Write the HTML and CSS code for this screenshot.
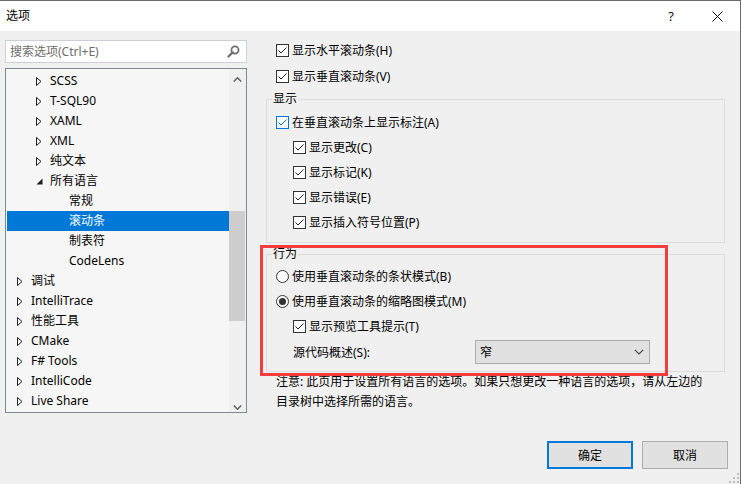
FILE: index.html
```html
<!DOCTYPE html>
<html lang="zh-CN">
<head>
<meta charset="utf-8">
<title>选项</title>
<link rel="stylesheet" href="styles.css">
</head>
<body>
<div class="window">
  <div class="titlebar">
    <span class="title">选项</span>
    <span class="cap-btn help">?</span>
    <span class="cap-btn close"><svg width="11" height="11" viewBox="0 0 11 11"><path d="M0.5 0.5 L10.5 10.5 M10.5 0.5 L0.5 10.5" stroke="#111" stroke-width="1" fill="none"/></svg></span>
  </div>
  <div class="content">
    <div class="main">
      <div class="left">
        <div class="search">
          <span class="placeholder">搜索选项(Ctrl+E)</span>
          <svg class="search-icon" width="13" height="13" viewBox="0 0 13 13"><circle cx="8" cy="5" r="3.6" fill="none" stroke="#6f6f6f" stroke-width="1.7"/><path d="M5.6 7.4 L1.5 11.5" stroke="#6f6f6f" stroke-width="2.2" stroke-linecap="round"/></svg>
        </div>
        <div class="tree">
          <ul class="tree-list">
            <li class="node l2"><span class="tw"><svg width="6" height="9" viewBox="0 0 6 9"><path d="M0.5 0.5 L5 4.5 L0.5 8.5 Z" fill="none" stroke="#1e1e1e"/></svg></span>SCSS</li>
            <li class="node l2"><span class="tw"><svg width="6" height="9" viewBox="0 0 6 9"><path d="M0.5 0.5 L5 4.5 L0.5 8.5 Z" fill="none" stroke="#1e1e1e"/></svg></span>T-SQL90</li>
            <li class="node l2"><span class="tw"><svg width="6" height="9" viewBox="0 0 6 9"><path d="M0.5 0.5 L5 4.5 L0.5 8.5 Z" fill="none" stroke="#1e1e1e"/></svg></span>XAML</li>
            <li class="node l2"><span class="tw"><svg width="6" height="9" viewBox="0 0 6 9"><path d="M0.5 0.5 L5 4.5 L0.5 8.5 Z" fill="none" stroke="#1e1e1e"/></svg></span>XML</li>
            <li class="node l2"><span class="tw"><svg width="6" height="9" viewBox="0 0 6 9"><path d="M0.5 0.5 L5 4.5 L0.5 8.5 Z" fill="none" stroke="#1e1e1e"/></svg></span>纯文本</li>
            <li class="node l2"><span class="tw"><svg width="7" height="7" viewBox="0 0 7 7"><path d="M6.5 0.5 L6.5 6.5 L0.5 6.5 Z" fill="#1e1e1e"/></svg></span>所有语言</li>
            <li class="node l3">常规</li>
            <li class="node l3 selected">滚动条</li>
            <li class="node l3">制表符</li>
            <li class="node l3">CodeLens</li>
            <li class="node l1"><span class="tw"><svg width="6" height="9" viewBox="0 0 6 9"><path d="M0.5 0.5 L5 4.5 L0.5 8.5 Z" fill="none" stroke="#1e1e1e"/></svg></span>调试</li>
            <li class="node l1"><span class="tw"><svg width="6" height="9" viewBox="0 0 6 9"><path d="M0.5 0.5 L5 4.5 L0.5 8.5 Z" fill="none" stroke="#1e1e1e"/></svg></span>IntelliTrace</li>
            <li class="node l1"><span class="tw"><svg width="6" height="9" viewBox="0 0 6 9"><path d="M0.5 0.5 L5 4.5 L0.5 8.5 Z" fill="none" stroke="#1e1e1e"/></svg></span>性能工具</li>
            <li class="node l1"><span class="tw"><svg width="6" height="9" viewBox="0 0 6 9"><path d="M0.5 0.5 L5 4.5 L0.5 8.5 Z" fill="none" stroke="#1e1e1e"/></svg></span>CMake</li>
            <li class="node l1"><span class="tw"><svg width="6" height="9" viewBox="0 0 6 9"><path d="M0.5 0.5 L5 4.5 L0.5 8.5 Z" fill="none" stroke="#1e1e1e"/></svg></span>F# Tools</li>
            <li class="node l1"><span class="tw"><svg width="6" height="9" viewBox="0 0 6 9"><path d="M0.5 0.5 L5 4.5 L0.5 8.5 Z" fill="none" stroke="#1e1e1e"/></svg></span>IntelliCode</li>
            <li class="node l1"><span class="tw"><svg width="6" height="9" viewBox="0 0 6 9"><path d="M0.5 0.5 L5 4.5 L0.5 8.5 Z" fill="none" stroke="#1e1e1e"/></svg></span>Live Share</li>
            <li class="node l1"><span class="tw"><svg width="6" height="9" viewBox="0 0 6 9"><path d="M0.5 0.5 L5 4.5 L0.5 8.5 Z" fill="none" stroke="#1e1e1e"/></svg></span>Web Live Preview</li>
          </ul>
          <div class="vscroll">
            <div class="sb-btn up"><svg width="9" height="5" viewBox="0 0 9 5"><path d="M0.8 4.5 L4.5 0.8 L8.2 4.5" fill="none" stroke="#606060" stroke-width="1.5"/></svg></div>
            <div class="sb-track"><div class="sb-thumb"></div></div>
            <div class="sb-btn down"><svg width="9" height="5" viewBox="0 0 9 5"><path d="M0.8 0.5 L4.5 4.2 L8.2 0.5" fill="none" stroke="#606060" stroke-width="1.5"/></svg></div>
          </div>
        </div>
      </div>

      <div class="right">
        <div class="opt top"><span class="cb"><svg width="11" height="11" viewBox="0 0 11 11"><path d="M1.5 5.5 L4 8 L9.5 2.5" fill="none" stroke="#222" stroke-width="1"/></svg></span>显示水平滚动条(H)</div>
        <div class="opt top second"><span class="cb"><svg width="11" height="11" viewBox="0 0 11 11"><path d="M1.5 5.5 L4 8 L9.5 2.5" fill="none" stroke="#222" stroke-width="1"/></svg></span>显示垂直滚动条(V)</div>

        <div class="group g1">
          <span class="legend">显示</span>
          <div class="items">
            <div class="opt"><span class="cb hover"><svg width="11" height="11" viewBox="0 0 11 11"><path d="M1.5 5.5 L4 8 L9.5 2.5" fill="none" stroke="#0078d7" stroke-width="1"/></svg></span>在垂直滚动条上显示标注(A)</div>
            <div class="opt sub"><span class="cb"><svg width="11" height="11" viewBox="0 0 11 11"><path d="M1.5 5.5 L4 8 L9.5 2.5" fill="none" stroke="#222" stroke-width="1"/></svg></span>显示更改(C)</div>
            <div class="opt sub"><span class="cb"><svg width="11" height="11" viewBox="0 0 11 11"><path d="M1.5 5.5 L4 8 L9.5 2.5" fill="none" stroke="#222" stroke-width="1"/></svg></span>显示标记(K)</div>
            <div class="opt sub"><span class="cb"><svg width="11" height="11" viewBox="0 0 11 11"><path d="M1.5 5.5 L4 8 L9.5 2.5" fill="none" stroke="#222" stroke-width="1"/></svg></span>显示错误(E)</div>
            <div class="opt sub"><span class="cb"><svg width="11" height="11" viewBox="0 0 11 11"><path d="M1.5 5.5 L4 8 L9.5 2.5" fill="none" stroke="#222" stroke-width="1"/></svg></span>显示插入符号位置(P)</div>
          </div>
        </div>

        <div class="group g2">
          <span class="legend">行为</span>
          <div class="items">
            <div class="opt"><span class="rb"></span>使用垂直滚动条的条状模式(B)</div>
            <div class="opt"><span class="rb on"><span class="dot"></span></span>使用垂直滚动条的缩略图模式(M)</div>
            <div class="opt sub"><span class="cb"><svg width="11" height="11" viewBox="0 0 11 11"><path d="M1.5 5.5 L4 8 L9.5 2.5" fill="none" stroke="#222" stroke-width="1"/></svg></span>显示预览工具提示(T)</div>
            <div class="combo-row sub">
              <span class="combo-label">源代码概述(S):</span>
              <div class="combo"><span>窄</span><svg width="10" height="6" viewBox="0 0 10 6"><path d="M0.8 0.8 L5 5 L9.2 0.8" fill="none" stroke="#444" stroke-width="1.1"/></svg></div>
            </div>
          </div>
        </div>

        <p class="note">注意: 此页用于设置所有语言的选项。如果只想更改一种语言的选项，请从左边的<br>目录树中选择所需的语言。</p>
      </div>
    </div>

    <div class="footer">
      <button class="btn default">确定</button>
      <button class="btn">取消</button>
    </div>
  </div>
  <svg class="grip" width="12" height="12" viewBox="0 0 12 12"><g fill="#bcbcbc"><rect x="9" y="1" width="2" height="2"/><rect x="9" y="5" width="2" height="2"/><rect x="5" y="5" width="2" height="2"/><rect x="9" y="9" width="2" height="2"/><rect x="5" y="9" width="2" height="2"/><rect x="1" y="9" width="2" height="2"/></g></svg>
  <div class="annotation"></div>
</div>
</body>
</html>
```

FILE: styles.css
```css
* { box-sizing: border-box; }
html, body { margin: 0; padding: 0; }
body {
  width: 741px;
  height: 484px;
  overflow: hidden;
  font-family: "Noto Sans", "Noto Sans CJK SC", sans-serif;
  font-size: 12px;
  color: #000;
  background: #f0f0f0;
}
.window {
  position: relative;
  width: 741px;
  height: 484px;
  border-top: 1px solid #6b6b6b;
  border-right: 1px solid #6b6b6b;
  background: #f0f0f0;
  display: flex;
  flex-direction: column;
}
.titlebar {
  height: 30px;
  background: #fff;
  display: flex;
  align-items: center;
  flex-shrink: 0;
}
.title {
  flex: 1;
  padding-left: 6px;
  line-height: 30px;
}
.cap-btn {
  width: 46px;
  height: 30px;
  display: flex;
  align-items: center;
  justify-content: center;
}
.help { font-size: 13px; color: #111; }
.content {
  flex: 1;
  display: flex;
  flex-direction: column;
}
.main {
  display: flex;
  padding-left: 5px;
  gap: 19px;
}
.left {
  width: 242px;
  padding-top: 9px;
  display: flex;
  flex-direction: column;
  gap: 5px;
}
.search {
  height: 23px;
  border: 1px solid #cccedb;
  background: #fff;
  display: flex;
  align-items: center;
  padding: 0 6px 0 4px;
}
.placeholder {
  flex: 1;
  color: #6d6d6d;
  line-height: 20px;
}
.search-icon { display: block; }
.tree {
  height: 345px;
  border: 1px solid #828790;
  background: #f6f6f6;
  display: flex;
  overflow: hidden;
}
.tree-list {
  list-style: none;
  margin: 0;
  padding: 2px 0 0 1px;
  flex: 1;
  overflow: hidden;
}
.node {
  height: 20px;
  line-height: 20px;
  display: flex;
  align-items: center;
  white-space: nowrap;
}
.tw {
  width: 14px;
  display: flex;
  align-items: center;
}
.tw svg { display: block; }
.l1 { padding-left: 10px; }
.l2 { padding-left: 29px; }
.l3 { padding-left: 62px; }
.selected { background: #0078d7; color: #fff; }
.vscroll {
  width: 17px;
  display: flex;
  flex-direction: column;
  background: #f0f0f0;
}
.sb-btn {
  height: 17px;
  display: flex;
  justify-content: center;
  flex-shrink: 0;
}
.sb-btn svg { display: block; }
.sb-btn.up { padding-top: 8px; }
.sb-btn.down { padding-top: 10px; }
.sb-track { flex: 1; }
.sb-thumb {
  margin-top: 125px;
  height: 110px;
  margin-right: 1px;
  background: #cdcdcd;
}

.right {
  width: 459px;
  padding-top: 9px;
  display: flex;
  flex-direction: column;
}
.opt {
  height: 20px;
  display: flex;
  align-items: center;
  gap: 3px;
  white-space: nowrap;
}
.opt.top { margin-left: 10px; }
.opt.second { margin-top: 6px; }
.cb {
  width: 13px;
  height: 13px;
  border: 1px solid #333;
  background: #fff;
  display: flex;
  flex-shrink: 0;
}
.cb svg { display: block; }
.cb.hover { border-color: #0078d7; }
.rb {
  width: 13px;
  height: 13px;
  border: 1px solid #333;
  border-radius: 50%;
  background: #fff;
  display: flex;
  align-items: center;
  justify-content: center;
  flex-shrink: 0;
}
.dot {
  width: 7px;
  height: 7px;
  border-radius: 50%;
  background: #333;
}
.group {
  border: 1px solid #dcdcdc;
  padding: 0 0 10px 9px;
  display: flex;
  flex-direction: column;
}
.g1 { margin-top: 13px; }
.g2 { margin-top: 11px; padding-bottom: 7px; }
.legend {
  align-self: flex-start;
  margin: -9px 0 0 -4px;
  padding: 0 1px;
  background: #f0f0f0;
  line-height: 16px;
}
.items {
  display: flex;
  flex-direction: column;
  gap: 5px;
  margin-top: 5px;
}
.g2 .items { margin-top: 4px; }
.sub { margin-left: 17px; }
.combo-row {
  display: flex;
  align-items: center;
  margin-top: -1px;
}
.combo-label { width: 182px; }
.combo {
  width: 175px;
  height: 24px;
  background: #e1e1e1;
  border: 1px solid #adadad;
  display: flex;
  align-items: center;
  justify-content: space-between;
  padding: 0 5px 0 4px;
}
.combo svg { display: block; }
.note {
  margin: 0;
  padding-left: 10px;
  line-height: 20px;
  white-space: nowrap;
}
.footer {
  margin-top: 28px;
  display: flex;
  justify-content: flex-end;
  gap: 9px;
  padding-right: 12px;
}
.btn {
  width: 86px;
  height: 28px;
  background: #e1e1e1;
  border: 1px solid #adadad;
  font-family: inherit;
  font-size: 12px;
  color: #000;
  padding: 0;
}
.btn.default { border: 2px solid #0078d7; }
.grip {
  position: absolute;
  right: 0;
  bottom: 0;
}
.annotation {
  position: absolute;
  left: 260px;
  top: 244px;
  width: 408px;
  height: 131px;
  border: 3px solid #f53c3c;
  pointer-events: none;
}
```
